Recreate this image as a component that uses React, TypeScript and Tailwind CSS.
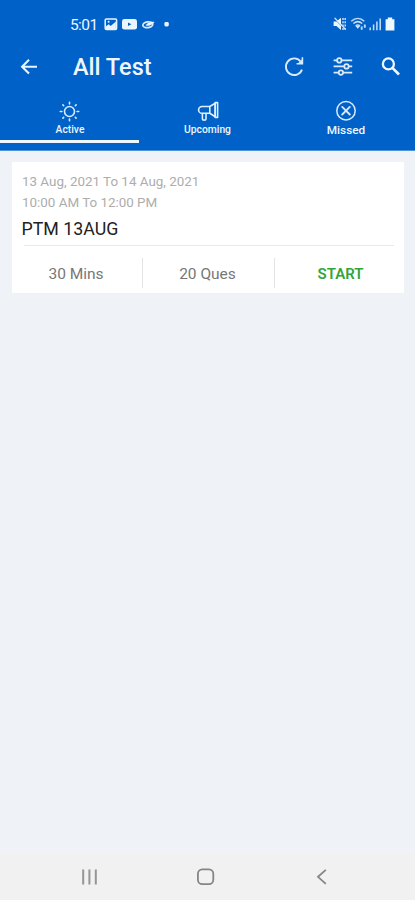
import React from 'react';

const BackIcon = () => (
  <svg width="18" height="18" viewBox="0 0 18 18" fill="none" stroke="#e9f5ff" strokeWidth="2.1">
    <path d="M17 8.7H2.8M9 1.8 2.1 8.7 9 15.6" />
  </svg>
);

const RefreshIcon = () => (
  <svg width="22" height="22" viewBox="0 0 22 22" fill="none" stroke="#d9eafb" strokeWidth="1.9">
    <path d="M19 13.6A8.3 8.3 0 1 1 17.6 5.4" />
    <path d="M20.2 1.2v7.4h-6.6v-1.6h3.2l1.8-1.8v-4z" fill="#d9eafb" stroke="none" />
    <path d="m14.6 7.8 4.8-4.6v4.6z" fill="#d9eafb" stroke="none" />
  </svg>
);

const FilterIcon = () => (
  <svg width="20" height="20" viewBox="0 0 20 20" fill="none" stroke="#d9eafb" strokeWidth="1.8">
    <path d="M.6 3.4H4M8.6 3.4h10.6M.6 9.4H11M16 9.4h3.2M.6 15.6h5M10.2 15.6h9" />
    <circle cx="6.3" cy="3.4" r="2.2" />
    <circle cx="13.5" cy="9.4" r="2.2" />
    <circle cx="7.9" cy="15.6" r="2.2" />
  </svg>
);

const SearchIcon = () => (
  <svg width="20" height="20" viewBox="0 0 20 20" fill="none" stroke="#f0f8ff" strokeWidth="2.3">
    <circle cx="7.4" cy="6.9" r="5.5" />
    <path d="m11.4 10.9 6.6 6.6" strokeWidth="2.7" />
  </svg>
);

const SunIcon = () => (
  <svg width="22" height="22" viewBox="0 0 22 22" fill="none" stroke="#d9eafb" strokeWidth="1.6" strokeLinecap="round">
    <circle cx="10.5" cy="11.5" r="5" />
    <path d="M10.5 2.3v1.6M10.5 19.1v1.6M1.3 11.5h1.6M18.1 11.5h1.6M3.9 4.9l.8.8M16.3 17.3l.8.8M3.9 18.1l.8-.8M16.3 5.7l.8-.8" />
  </svg>
);

const MegaphoneIcon = () => (
  <svg width="22" height="22" viewBox="0 0 22 22" fill="none" stroke="#e0efff" strokeWidth="1.6" strokeLinejoin="round">
    <path d="M12.8 6.5H5a3.4 3.4 0 0 0 0 6.8h7.8zM12.8 6.5l5.4-3.2v13.4l-5.4-3.4" />
    <path d="M18.2 2.6h2.4v14.8h-2.4zM5.4 13.3v5.6c0 1.6 3.6 1.6 3.6 0v-5.6" />
  </svg>
);

const MissedIcon = () => (
  <svg width="22" height="22" viewBox="0 0 22 22" fill="none" stroke="#d9eafb" strokeWidth="1.5" strokeLinecap="round">
    <circle cx="11" cy="10.7" r="9.2" />
    <path d="m7.2 6.9 7.6 7.6M14.8 6.9l-7.6 7.6" strokeWidth="1.8" />
  </svg>
);

const NotificationIcons = () => (
  <svg width="68" height="14" viewBox="0 0 68 14" fill="#e9f5ff">
    <rect x="2.2" y="1.9" width="11.4" height="10.6" rx="1.2" fill="none" stroke="#e9f5ff" strokeWidth="1.5" />
    <path d="M3 12V9.2l2.7-2 2 1.8 5.2-4.4V12z" />
    <circle cx="5.6" cy="4.8" r="1" />
    <rect x="19" y="2" width="15" height="10.6" rx="2.4" />
    <path d="m25 5.5 3.4 1.8L25 9.1z" fill="#0062c9" />
    <ellipse cx="44.8" cy="7.7" rx="5" ry="2.9" fill="none" stroke="#d9eafb" strokeWidth="1.7" transform="rotate(-8 44.8 7.7)" />
    <path d="M42.5 8.2c3 1.4 6.2.4 9-3.2-3.6-.6-6.6.4-9 3.2z" />
    <rect x="61.4" y="5" width="4.4" height="4.4" rx="1.4" />
  </svg>
);

const StatusIcons = () => (
  <svg width="64" height="16" viewBox="0 0 64 16" fill="none" stroke="#c5def8">
    <path d="M1.6 5.4h2.8l4.6-3.6v12.2l-4.6-4H1.6z" fill="#e9f5ff" stroke="none" />
    <path d="m1.5 1.8 12 12" stroke="#0062c9" strokeWidth="1" />
    <path d="m2.6 1.8 10.6 11" stroke="#e9f5ff" strokeWidth="1.2" />
    <path d="M11 2v12M13.2 2v12" strokeWidth="1.5" strokeDasharray="2 1.3" />
    <path d="M19.3 5.2c4-3.7 9-3.7 13 0M21.4 7.5c2.8-2.4 6-2.4 8.8 0M23.6 9.8c1.4-1.1 3-1.1 4.4 0" strokeWidth="1.5" />
    <path d="m23.6 10 2.2 2.8 2.2-2.8z" fill="#d9eafb" stroke="none" />
    <path d="M29.7 10.6v3.2M32.8 8.4v3.4" strokeWidth="1.8" />
    <path d="M38.2 11.4v2.8M41.6 8.5v5.7M44.9 5.6v8.6M48.2 2.4v11.8" strokeWidth="1.5" />
    <path d="M53.6 3.2h2.2V1.4h4.4v1.8h2.2v11.2h-8.8z" fill="#f0f8ff" stroke="none" />
  </svg>
);

const tabs = [
  { label: 'Active', icon: <SunIcon />, active: true, labelClass: 'pl-[1px] text-[10.3px]' },
  { label: 'Upcoming', icon: <MegaphoneIcon />, active: false, labelClass: 'text-[10.3px]' },
  { label: 'Missed', icon: <MissedIcon />, active: false, labelClass: 'pl-[1px] text-[11.8px]' },
];

export default function App() {
  return (
    <div className="flex h-[900px] w-[415px] flex-col overflow-hidden bg-[#eff3f8] font-['Roboto',sans-serif]">
      <header className="flex h-[151px] shrink-0 flex-col border-b border-[#4c93dc] bg-[#0062c9] text-[#eef7ff]">
        {/* Status bar */}
        <div className="flex h-[48px] items-center pl-[70px] pr-[19px]">
          <span className="w-[33px] pt-px text-[15.5px] leading-[18px] tracking-[-0.6px]">5:01</span>
          <NotificationIcons />
          <div className="ml-auto">
            <StatusIcons />
          </div>
        </div>

        {/* Title bar */}
        <div className="flex h-[38px] items-center pl-[20px] pr-[14px]">
          <BackIcon />
          <h1 className="ml-[35px] pt-[2px] text-[23.5px] font-medium leading-none">All Test</h1>
          <div className="ml-auto flex items-center gap-[28px]">
            <RefreshIcon />
            <FilterIcon />
            <SearchIcon />
          </div>
        </div>

        {/* Tabs */}
        <nav className="grid h-[57px] grid-cols-[139px_137px_139px]">
          {tabs.map((tab) => (
            <div
              key={tab.label}
              className={`flex flex-col items-center border-b-[3px] pt-[14px] ${tab.active ? 'border-[#eef7ff]' : 'border-transparent'}`}
            >
              {tab.icon}
              <span className={`mt-[1px] font-medium leading-[14px] ${tab.labelClass}`}>{tab.label}</span>
            </div>
          ))}
        </nav>
      </header>

      <main className="flex-1 px-[12px] pt-[11px]">
        <section className="h-[131px] w-[392px] rounded-[1px] bg-white px-[10px] pt-[9px]">
          <p className="text-[13.4px] leading-[21px] text-[#adadad]">13 Aug, 2021 To 14 Aug, 2021</p>
          <p className="text-[13.4px] leading-[21px] text-[#adadad]">10:00 AM To 12:00 PM</p>
          <h2 className="-ml-[0.5px] text-[17.8px] leading-[32px] text-[#222222]">PTM 13AUG</h2>
          <div className="ml-[2px] h-px bg-[#e9e9e9]" />
          <div className="-mx-[10px] mt-[12px] grid h-[30px] grid-cols-[131px_132px_129px] grid-rows-[30px] text-center text-[15.5px] text-[#777777]">
            <span className="border-r border-[#e4e4e4] pr-[2px] leading-[32px]">30 Mins</span>
            <span className="border-r border-[#e4e4e4] pr-[2px] leading-[32px]">20 Ques</span>
            <span className="pl-[2px] text-[15px] font-semibold leading-[32px] text-[#32a53a]">START</span>
          </div>
        </section>
      </main>

      {/* Android navigation */}
      <footer className="flex h-[46px] shrink-0 items-center justify-between bg-[#f1f1f1] pl-[80px] pr-[84px]">
        <svg width="18" height="18" viewBox="0 0 18 18" stroke="#959595" strokeWidth="2">
          <path d="M3.2 1.5v15M9.4 1.5v15M15.8 1.5v15" />
        </svg>
        <svg width="18" height="18" viewBox="0 0 18 18" fill="none" stroke="#858585" strokeWidth="1.8">
          <rect x=".9" y="1.3" width="15.4" height="14.8" rx="4.4" />
        </svg>
        <svg width="18" height="18" viewBox="0 0 18 18" fill="none" stroke="#858585" strokeWidth="1.8">
          <path d="M12.8 1.8 5 8.8l7.8 7" />
        </svg>
      </footer>
    </div>
  );
}
